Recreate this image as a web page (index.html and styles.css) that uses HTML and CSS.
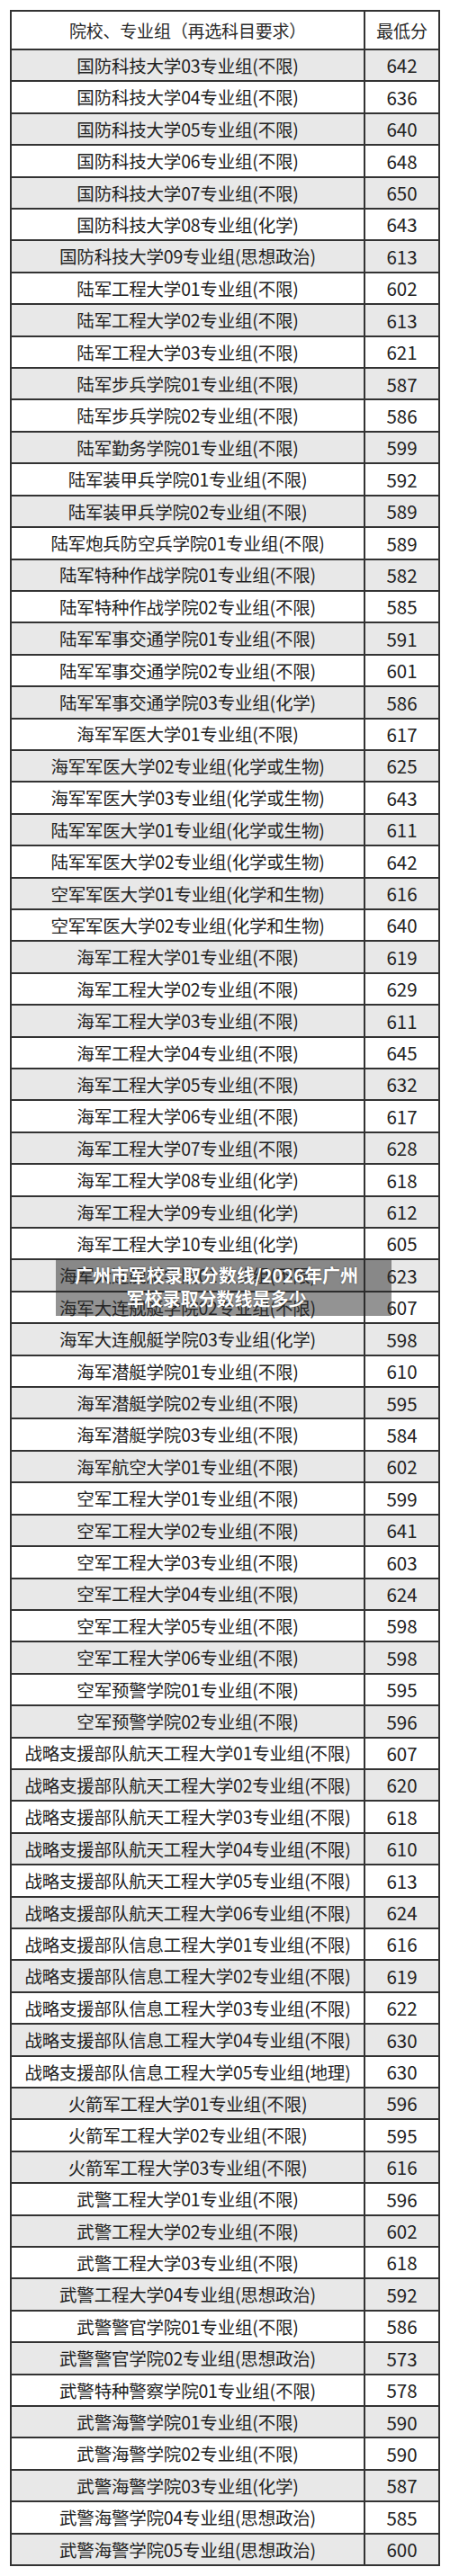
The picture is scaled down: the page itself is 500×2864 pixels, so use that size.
FILE: index.html
```html
<!DOCTYPE html>
<html lang="zh-CN">
<head>
<meta charset="utf-8">
<title>广州市军校录取分数线</title>
<link rel="stylesheet" href="styles.css">
</head>
<body>
<div class="page">
<div class="grid">
<div class="h">院校、专业组（再选科目要求）</div><div class="h">最低分</div>
<div class="g">国防科技大学03专业组(不限)</div><div class="g n">642</div>
<div>国防科技大学04专业组(不限)</div><div class="n">636</div>
<div class="g">国防科技大学05专业组(不限)</div><div class="g n">640</div>
<div>国防科技大学06专业组(不限)</div><div class="n">648</div>
<div class="g">国防科技大学07专业组(不限)</div><div class="g n">650</div>
<div>国防科技大学08专业组(化学)</div><div class="n">643</div>
<div class="g">国防科技大学09专业组(思想政治)</div><div class="g n">613</div>
<div>陆军工程大学01专业组(不限)</div><div class="n">602</div>
<div class="g">陆军工程大学02专业组(不限)</div><div class="g n">613</div>
<div>陆军工程大学03专业组(不限)</div><div class="n">621</div>
<div class="g">陆军步兵学院01专业组(不限)</div><div class="g n">587</div>
<div>陆军步兵学院02专业组(不限)</div><div class="n">586</div>
<div class="g">陆军勤务学院01专业组(不限)</div><div class="g n">599</div>
<div>陆军装甲兵学院01专业组(不限)</div><div class="n">592</div>
<div class="g">陆军装甲兵学院02专业组(不限)</div><div class="g n">589</div>
<div>陆军炮兵防空兵学院01专业组(不限)</div><div class="n">589</div>
<div class="g">陆军特种作战学院01专业组(不限)</div><div class="g n">582</div>
<div>陆军特种作战学院02专业组(不限)</div><div class="n">585</div>
<div class="g">陆军军事交通学院01专业组(不限)</div><div class="g n">591</div>
<div>陆军军事交通学院02专业组(不限)</div><div class="n">601</div>
<div class="g">陆军军事交通学院03专业组(化学)</div><div class="g n">586</div>
<div>海军军医大学01专业组(不限)</div><div class="n">617</div>
<div class="g">海军军医大学02专业组(化学或生物)</div><div class="g n">625</div>
<div>海军军医大学03专业组(化学或生物)</div><div class="n">643</div>
<div class="g">陆军军医大学01专业组(化学或生物)</div><div class="g n">611</div>
<div>陆军军医大学02专业组(化学或生物)</div><div class="n">642</div>
<div class="g">空军军医大学01专业组(化学和生物)</div><div class="g n">616</div>
<div>空军军医大学02专业组(化学和生物)</div><div class="n">640</div>
<div class="g">海军工程大学01专业组(不限)</div><div class="g n">619</div>
<div>海军工程大学02专业组(不限)</div><div class="n">629</div>
<div class="g">海军工程大学03专业组(不限)</div><div class="g n">611</div>
<div>海军工程大学04专业组(不限)</div><div class="n">645</div>
<div class="g">海军工程大学05专业组(不限)</div><div class="g n">632</div>
<div>海军工程大学06专业组(不限)</div><div class="n">617</div>
<div class="g">海军工程大学07专业组(不限)</div><div class="g n">628</div>
<div>海军工程大学08专业组(化学)</div><div class="n">618</div>
<div class="g">海军工程大学09专业组(化学)</div><div class="g n">612</div>
<div>海军工程大学10专业组(化学)</div><div class="n">605</div>
<div class="g">海军大连舰艇学院01专业组(不限)</div><div class="g n">623</div>
<div>海军大连舰艇学院02专业组(不限)</div><div class="n">607</div>
<div class="g">海军大连舰艇学院03专业组(化学)</div><div class="g n">598</div>
<div>海军潜艇学院01专业组(不限)</div><div class="n">610</div>
<div class="g">海军潜艇学院02专业组(不限)</div><div class="g n">595</div>
<div>海军潜艇学院03专业组(不限)</div><div class="n">584</div>
<div class="g">海军航空大学01专业组(不限)</div><div class="g n">602</div>
<div>空军工程大学01专业组(不限)</div><div class="n">599</div>
<div class="g">空军工程大学02专业组(不限)</div><div class="g n">641</div>
<div>空军工程大学03专业组(不限)</div><div class="n">603</div>
<div class="g">空军工程大学04专业组(不限)</div><div class="g n">624</div>
<div>空军工程大学05专业组(不限)</div><div class="n">598</div>
<div class="g">空军工程大学06专业组(不限)</div><div class="g n">598</div>
<div>空军预警学院01专业组(不限)</div><div class="n">595</div>
<div class="g">空军预警学院02专业组(不限)</div><div class="g n">596</div>
<div>战略支援部队航天工程大学01专业组(不限)</div><div class="n">607</div>
<div class="g">战略支援部队航天工程大学02专业组(不限)</div><div class="g n">620</div>
<div>战略支援部队航天工程大学03专业组(不限)</div><div class="n">618</div>
<div class="g">战略支援部队航天工程大学04专业组(不限)</div><div class="g n">610</div>
<div>战略支援部队航天工程大学05专业组(不限)</div><div class="n">613</div>
<div class="g">战略支援部队航天工程大学06专业组(不限)</div><div class="g n">624</div>
<div>战略支援部队信息工程大学01专业组(不限)</div><div class="n">616</div>
<div class="g">战略支援部队信息工程大学02专业组(不限)</div><div class="g n">619</div>
<div>战略支援部队信息工程大学03专业组(不限)</div><div class="n">622</div>
<div class="g">战略支援部队信息工程大学04专业组(不限)</div><div class="g n">630</div>
<div>战略支援部队信息工程大学05专业组(地理)</div><div class="n">630</div>
<div class="g">火箭军工程大学01专业组(不限)</div><div class="g n">596</div>
<div>火箭军工程大学02专业组(不限)</div><div class="n">595</div>
<div class="g">火箭军工程大学03专业组(不限)</div><div class="g n">616</div>
<div>武警工程大学01专业组(不限)</div><div class="n">596</div>
<div class="g">武警工程大学02专业组(不限)</div><div class="g n">602</div>
<div>武警工程大学03专业组(不限)</div><div class="n">618</div>
<div class="g">武警工程大学04专业组(思想政治)</div><div class="g n">592</div>
<div>武警警官学院01专业组(不限)</div><div class="n">586</div>
<div class="g">武警警官学院02专业组(思想政治)</div><div class="g n">573</div>
<div>武警特种警察学院01专业组(不限)</div><div class="n">578</div>
<div class="g">武警海警学院01专业组(不限)</div><div class="g n">590</div>
<div>武警海警学院02专业组(不限)</div><div class="n">590</div>
<div class="g">武警海警学院03专业组(化学)</div><div class="g n">587</div>
<div>武警海警学院04专业组(思想政治)</div><div class="n">585</div>
<div class="g">武警海警学院05专业组(思想政治)</div><div class="g n">600</div>
</div>
<div class="caption">广州市军校录取分数线/2026年广州<br>军校录取分数线是多少</div>
</div>
</body>
</html>
```

FILE: styles.css
```css
html, body {
  margin: 0;
  padding: 0;
  background: #ffffff;
}

.page {
  position: relative;
  width: 500px;
  padding-top: 11px;
  font-family: "Noto Sans CJK SC", "Noto Sans", sans-serif;
  color: #222222;
}

.grid {
  margin-left: 11px;
  width: 478px;
  box-sizing: border-box;
  display: grid;
  grid-template-columns: 1fr 81px;
  grid-template-rows: 41px;
  grid-auto-rows: 33.41px;
  gap: 2px;
  padding: 2px;
  background: #333333;
}

.grid > div {
  background: #ffffff;
  display: flex;
  align-items: center;
  justify-content: center;
  font-size: 19.5px;
  line-height: 1;
  white-space: nowrap;
  letter-spacing: -0.2px;
}

.grid > div.g {
  background: #e8e8e8;
}

.grid > div.h {
  font-size: 19px;
  color: #2a2a2a;
}

.grid > div.n {
  font-size: 20.5px;
  letter-spacing: 0;
}

.caption {
  position: absolute;
  left: 62px;
  top: 1400px;
  width: 373px;
  height: 63px;
  box-sizing: border-box;
  padding: 5px 16px 0 0;
  background: rgba(40, 40, 40, 0.5);
  color: #ffffff;
  font-weight: bold;
  font-size: 20px;
  line-height: 26px;
  text-align: center;
  overflow: hidden;
  text-shadow: 0 0 2px rgba(0, 0, 0, 0.5);
}
```
